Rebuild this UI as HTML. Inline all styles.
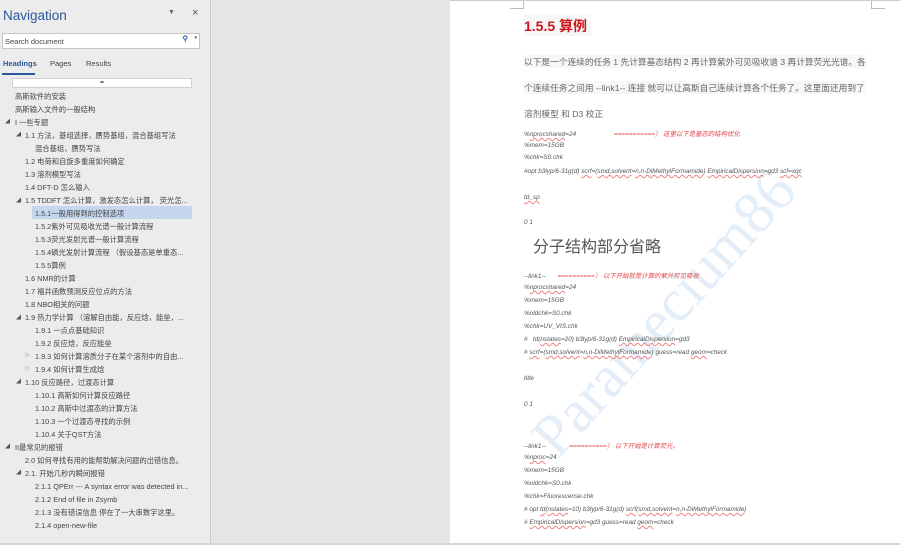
<!DOCTYPE html>
<html><head><meta charset="utf-8"><style>
*{margin:0;padding:0;box-sizing:border-box}
body{width:900px;height:545px;overflow:hidden;position:relative;background:#e5e5e5;font-family:"Liberation Sans","Noto Sans CJK SC",sans-serif}
#nav{position:absolute;left:0;top:0;width:211px;height:545px;background:#ececec;border-right:1px solid #c8c8c8}
.t{position:absolute;white-space:nowrap}
#title{left:3px;top:8px;font-size:13.5px;color:#2b579a;}
#search{position:absolute;left:2px;top:33px;width:198px;height:16px;background:#fff;border:1px solid #c6c6c6;font-size:7.5px;color:#444;padding:3px 0 0 2px}
.tab{position:absolute;top:59px;font-size:7.5px;color:#444}
#ul{position:absolute;left:2px;top:73px;width:33px;height:2px;background:#2b579a}
#collapse{position:absolute;left:12px;top:78px;width:180px;height:10px;background:#fff;border:1px solid #d0d0d0;font-size:6px;text-align:center;color:#333;line-height:8px}
.h{position:absolute;font-size:7.3px;color:#444;white-space:nowrap;height:13px;line-height:13px}
.a{position:absolute;font-size:5px;color:#555}
#hl{position:absolute;left:32px;top:206px;width:160px;height:13px;background:#c5d7ef}
#page{position:absolute;left:450px;top:0;width:450px;height:545px;background:#fff}
.b{position:absolute;left:524px;font-size:8.7px;color:#666;white-space:nowrap;background:#f7f7f7}
.c{position:absolute;left:524px;font-size:6.4px;font-style:italic;color:#555;white-space:nowrap}
.r{color:#e0454a}
.u{text-decoration:underline wavy #f08080;text-decoration-thickness:0.4px}
</style></head><body>
<div id="nav">
<div class="t" id="title">Navigation</div>
<div class="t" style="left:168px;top:9px;font-size:7px;color:#666">▼</div>
<div class="t" style="left:192px;top:7px;font-size:11px;color:#555">×</div>
<div id="search">Search document<span style="position:absolute;right:11px;top:0;color:#2b579a;font-weight:bold">⚲</span><span style="position:absolute;right:2px;top:1px;font-size:5px">▾</span></div>
<div class="tab" style="left:3px;color:#2b579a;font-weight:bold">Headings</div>
<div class="tab" style="left:50px">Pages</div>
<div class="tab" style="left:86px">Results</div>
<div id="ul"></div>
<div id="collapse">≖</div>
<div id="hl"></div>
<div class="h" style="left:15px;top:90px">高斯软件的安装</div>
<div class="h" style="left:15px;top:103px">高斯输入文件的一般结构</div>
<div class="a" style="left:5px;top:118px">◢</div><div class="h" style="left:15px;top:116px">I 一些专题</div>
<div class="a" style="left:16px;top:131px">◢</div><div class="h" style="left:25px;top:129px">1.1 方法，基组选择，赝势基组，混合基组写法</div>
<div class="h" style="left:35px;top:142px">混合基组，赝势写法</div>
<div class="h" style="left:25px;top:155px">1.2 电荷和自旋多重度如何确定</div>
<div class="h" style="left:25px;top:168px">1.3 溶剂模型写法</div>
<div class="h" style="left:25px;top:181px">1.4 DFT-D 怎么输入</div>
<div class="a" style="left:16px;top:197px">◢</div><div class="h" style="left:25px;top:194px">1.5 TDDFT 怎么计算，激发态怎么计算， 荧光怎...</div>
<div class="h" style="left:35px;top:207px">1.5.1一般用得到的控制选项</div>
<div class="h" style="left:35px;top:220px">1.5.2紫外可见吸收光谱一般计算流程</div>
<div class="h" style="left:35px;top:233px">1.5.3荧光发射光谱一般计算流程</div>
<div class="h" style="left:35px;top:246px">1.5.4磷光发射计算流程 （假设基态是单重态...</div>
<div class="h" style="left:35px;top:259px">1.5.5算例</div>
<div class="h" style="left:25px;top:272px">1.6 NMR的计算</div>
<div class="h" style="left:25px;top:285px">1.7 福井函数预测反应位点的方法</div>
<div class="h" style="left:25px;top:298px">1.8 NBO相关的问题</div>
<div class="a" style="left:16px;top:314px">◢</div><div class="h" style="left:25px;top:311px">1.9 热力学计算 （溶解自由能，反应焓，能垒，...</div>
<div class="h" style="left:35px;top:324px">1.9.1 一点点基础知识</div>
<div class="h" style="left:35px;top:337px">1.9.2 反应焓，反应能垒</div>
<div class="a" style="left:25px;top:352px">▷</div><div class="h" style="left:35px;top:350px">1.9.3 如何计算溶质分子在某个溶剂中的自由...</div>
<div class="a" style="left:25px;top:365px">▷</div><div class="h" style="left:35px;top:363px">1.9.4 如何计算生成焓</div>
<div class="a" style="left:16px;top:378px">◢</div><div class="h" style="left:25px;top:376px">1.10 反应路径，过渡态计算</div>
<div class="h" style="left:35px;top:389px">1.10.1 高斯如何计算反应路径</div>
<div class="h" style="left:35px;top:402px">1.10.2 高斯中过渡态的计算方法</div>
<div class="h" style="left:35px;top:415px">1.10.3 一个过渡态寻找的示例</div>
<div class="h" style="left:35px;top:428px">1.10.4 关于QST方法</div>
<div class="a" style="left:5px;top:443px">◢</div><div class="h" style="left:15px;top:441px">II最常见的报错</div>
<div class="h" style="left:25px;top:454px">2.0 如何寻找有用的能帮助解决问题的出错信息。</div>
<div class="a" style="left:16px;top:469px">◢</div><div class="h" style="left:25px;top:467px">2.1. 开始几秒内瞬间报错</div>
<div class="h" style="left:35px;top:480px">2.1.1 QPErr --- A syntax error was detected in...</div>
<div class="h" style="left:35px;top:493px">2.1.2 End of file in Zsymb</div>
<div class="h" style="left:35px;top:506px">2.1.3 没有错误信息 停在了一大串数字这里。</div>
<div class="h" style="left:35px;top:519px">2.1.4 open-new-file</div>
</div>
<div id="page">
<div style="position:absolute;left:73px;top:0;width:1px;height:8px;background:#bbb"></div>
<div style="position:absolute;left:60px;top:8px;width:14px;height:1px;background:#bbb"></div>
<div style="position:absolute;left:421px;top:0;width:1px;height:8px;background:#bbb"></div>
<div style="position:absolute;left:421px;top:8px;width:14px;height:1px;background:#bbb"></div>
<div style="position:absolute;left:0;top:0;width:450px;height:1px;background:#ccc"></div>
</div>
<svg style="position:absolute;left:450px;top:0" width="450" height="545"><text x="0" y="0" transform="translate(108,460) rotate(-48)" font-family="Liberation Serif,serif" font-size="60" fill="#e3eef9">Paramecium86</text></svg>
<div class="t" style="left:524px;top:14px;height:22px;padding:2px 4px 0 0;font-size:14px;font-weight:bold;color:#d0111b;background:#f7f7f7">1.5.5 算例</div>
<div class="b" style="top:55px">以下是一个连续的任务 1 先计算基态结构 2 再计算紫外可见吸收谱 3 再计算荧光光谱。各</div>
<div class="b" style="top:81px">个连续任务之间用 --link1-- 连接 就可以让高斯自己连续计算各个任务了。这里面还用到了</div>
<div class="b" style="top:107px;background:none">溶剂模型 和 D3 校正</div>
<div class="c" style="top:129px">%<span class="u">nprocshared</span>=24 <span class="r" style="margin-left:36px">===========） 这里以下是基态的结构优化</span></div>
<div class="c" style="top:142px">%mem=15GB</div>
<div class="c" style="top:154px">%chk=S0.chk</div>
<div class="c" style="top:168px">#opt b3lyp/6-31g(d) <span class="u">scrf</span>=(<span class="u">smd,solvent</span>=<span class="u">n,n-DiMethylFormamide</span>) <span class="u">EmpiricalDispersion</span>=gd3 <span class="u">scf=xqc</span></div>
<div class="c" style="top:194px"><span class="u">td_sp</span></div>
<div class="c" style="top:219px">0 1</div>
<div class="t" style="left:533px;top:233px;font-size:16px;color:#555">分子结构部分省略</div>
<div class="c" style="top:271px">--link1-- <span class="r" style="margin-left:10px">==========） 以下开始就是计算的紫外可见吸收</span></div>
<div class="c" style="top:284px">%<span class="u">nprocshared</span>=24</div>
<div class="c" style="top:297px">%mem=15GB</div>
<div class="c" style="top:310px">%oldchk=S0.chk</div>
<div class="c" style="top:323px">%chk=UV_VIS.chk</div>
<div class="c" style="top:336px">#&nbsp;&nbsp; td(<span class="u">nstates</span>=20) b3lyp/6-31g(d) <span class="u">EmpiricalDispersion</span>=gd3</div>
<div class="c" style="top:349px"># <span class="u">scrf</span>=(<span class="u">smd,solvent</span>=<span class="u">n,n-DiMethylFormamide</span>) guess=read <span class="u">geom</span>=check</div>
<div class="c" style="top:375px">title</div>
<div class="c" style="top:401px">0 1</div>
<div class="c" style="top:441px">--link1-- <span class="r" style="margin-left:22px">==========） 以下开始是计算荧光。</span></div>
<div class="c" style="top:454px">%<span class="u">nproc</span>=24</div>
<div class="c" style="top:467px">%mem=15GB</div>
<div class="c" style="top:480px">%oldchk=S0.chk</div>
<div class="c" style="top:493px">%chk=Fluorescense.chk</div>
<div class="c" style="top:506px"># opt <span class="u">td</span>(<span class="u">nstates</span>=10) b3lyp/6-31g(d) <span class="u">scrf</span>(<span class="u">smd,solvent</span>=<span class="u">n,n-DiMethylFormamide</span>)</div>
<div class="c" style="top:519px"># <span class="u">EmpiricalDispersion</span>=gd3 guess=read <span class="u">geom</span>=check</div>
<div style="position:absolute;left:0;top:543px;width:900px;height:2px;background:#d6d6d6"></div>
</body></html>
